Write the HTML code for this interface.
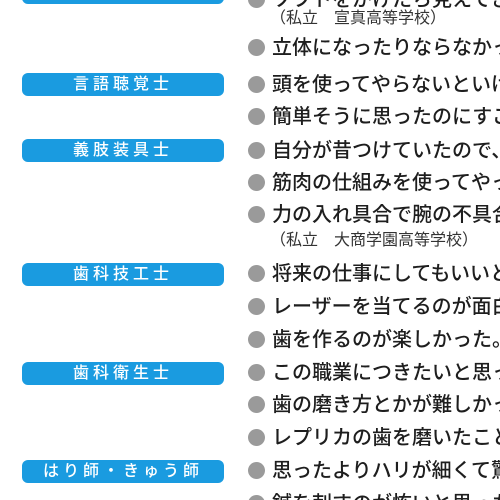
<!DOCTYPE html>
<html><head><meta charset="utf-8"><style>
html,body{margin:0;width:500px;height:500px;overflow:hidden;}
body{background:#fff;position:relative;font-family:"Liberation Sans","Noto Sans CJK JP",sans-serif;}
.p{position:absolute;left:22px;width:202px;height:23px;border-radius:6px;background:#1a9be0;color:#fff;font-size:16px;font-weight:500;letter-spacing:4px;text-align:center;line-height:23px;}
.r{position:absolute;left:248px;right:0;overflow:hidden;white-space:nowrap;font-size:20px;font-weight:500;color:#1e1e1e;line-height:24px;}
.r:before{content:"";display:inline-block;width:17px;height:17px;border-radius:50%;background:#9a9a9a;margin-right:7px;vertical-align:-2px;}
.s{position:absolute;left:270px;font-size:16px;color:#333;white-space:nowrap;line-height:20px;}
</style></head><body>
<div class="p" style="top:-19px">視能訓練士</div>
<div class="r" style="top:-12px">ソフトをかけたら見えてきた</div>
<div class="s" style="top:9px">（私立　宣真高等学校）</div>
<div class="r" style="top:36px">立体になったりならなかった</div>
<div class="p" style="top:73px">言語聴覚士</div>
<div class="r" style="top:73px">頭を使ってやらないといけない</div>
<div class="r" style="top:105px">簡単そうに思ったのにすごく</div>
<div class="p" style="top:139px">義肢装具士</div>
<div class="r" style="top:139px">自分が昔つけていたので、</div>
<div class="r" style="top:171px">筋肉の仕組みを使ってやった</div>
<div class="r" style="top:203px">力の入れ具合で腕の不具合</div>
<div class="s" style="top:231px">（私立　大商学園高等学校）</div>
<div class="p" style="top:263px">歯科技工士</div>
<div class="r" style="top:262px">将来の仕事にしてもいいと</div>
<div class="r" style="top:295px">レーザーを当てるのが面白い</div>
<div class="r" style="top:328px">歯を作るのが楽しかった。</div>
<div class="p" style="top:362px">歯科衛生士</div>
<div class="r" style="top:361px">この職業につきたいと思った</div>
<div class="r" style="top:393px">歯の磨き方とかが難しかった</div>
<div class="r" style="top:426px">レプリカの歯を磨いたこと</div>
<div class="p" style="top:460px">はり師・きゅう師</div>
<div class="r" style="top:459px">思ったよりハリが細くて驚いた</div>
<div class="r" style="top:492px">鍼を刺すのが怖いと思った</div>
</body></html>
